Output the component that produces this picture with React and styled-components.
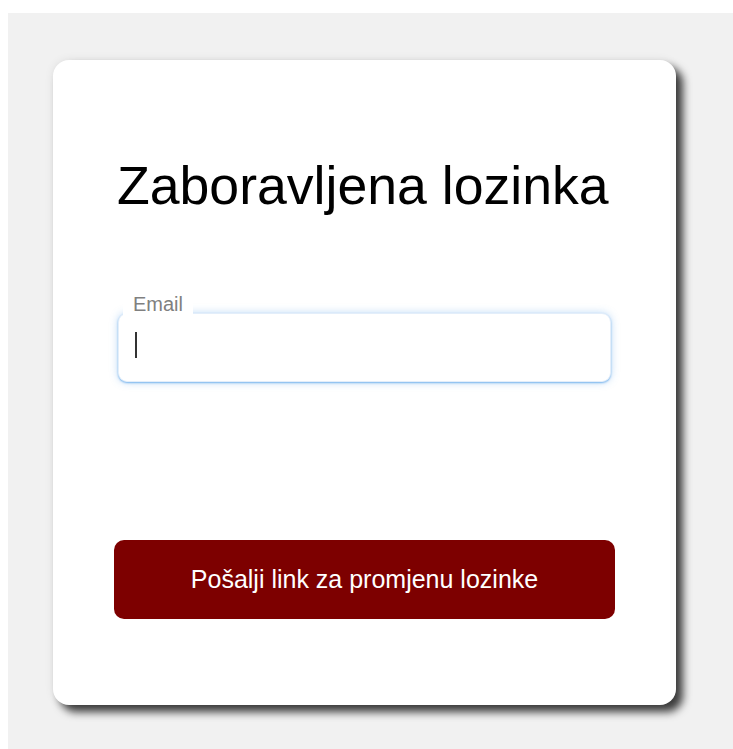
import React, { useState } from "react";
import styled, { createGlobalStyle } from "styled-components";

const GlobalStyle = createGlobalStyle`
    html, body {
        margin: 0;
        padding: 0;
        background: #ffffff;
    }
    body {
        font-family: "Liberation Sans", Arial, sans-serif;
    }
`

const Page = styled.div`
    margin: 13px 0 0 8px;
    min-height: calc(100vh - 13px);
    background: #f1f1f1;
    padding: 47px 0 0 45px;
    box-sizing: border-box;
`

const Card = styled.div`
    width: 623px;
    box-sizing: border-box;
    background: #ffffff;
    border-radius: 16px;
    padding: 95px 61px 86px;
    box-shadow: 7px 7px 9px rgba(0, 0, 0, 0.75), 0 0 10px rgba(0, 0, 0, 0.08);
    display: flex;
    flex-direction: column;
`

const Title = styled.h1`
    margin: 0;
    padding-left: 3px;
    font-size: 53.6px;
    font-weight: normal;
    line-height: 61px;
    color: #000000;
`

const Field = styled.div`
    position: relative;
    margin: 97px 4px 0;
`

const Label = styled.label`
    position: absolute;
    top: -20px;
    left: 5px;
    padding: 0 10px;
    background: #ffffff;
    font-size: 20px;
    line-height: 23px;
    color: #808080;
`

const Input = styled.input`
    display: block;
    width: 100%;
    height: 69px;
    box-sizing: border-box;
    border: 1px solid #e3eefa;
    border-radius: 9px;
    padding: 0 16px;
    font-family: inherit;
    font-size: 25px;
    color: #222;
    caret-color: transparent;
    outline: none;
    box-shadow: 0 1px 2px rgba(66, 150, 230, 0.65), 0 0 9px rgba(66, 150, 230, 0.35);
`

const Caret = styled.span`
    position: absolute;
    left: 17px;
    top: 19px;
    width: 2px;
    height: 26px;
    background: #333333;
    pointer-events: none;
`

const SubmitButton = styled.button`
    margin-top: 158px;
    height: 79px;
    border: none;
    border-radius: 10px;
    background: #7d0000;
    color: #ffffff;
    font-family: inherit;
    font-size: 25px;
    cursor: pointer;
`

const App = () => {
    const [email, setEmail] = useState("");
    return (
        <>
            <GlobalStyle />
            <Page>
                <Card>
                    <Title>Zaboravljena lozinka</Title>
                    <Field>
                        <Input id="email" type="email" value={email} onChange={e => setEmail(e.target.value)} />
                        <Label htmlFor="email">Email</Label>
                        {email === "" && <Caret />}
                    </Field>
                    <SubmitButton type="button">Pošalji link za promjenu lozinke</SubmitButton>
                </Card>
            </Page>
        </>
    );
};

export default App;
